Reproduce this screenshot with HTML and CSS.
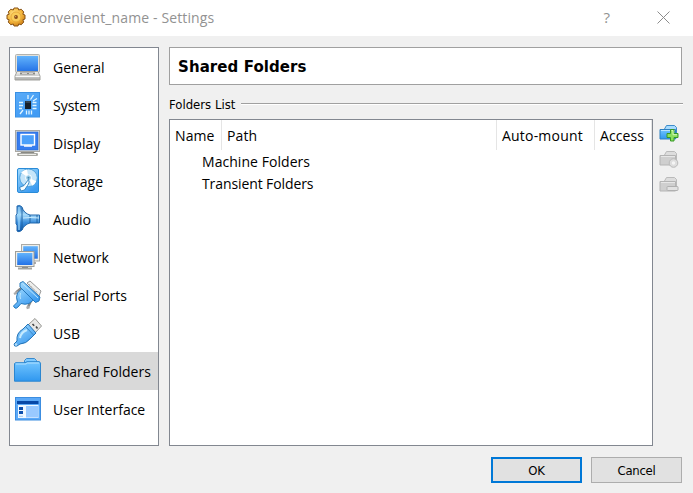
FILE: index.html
```html
<!DOCTYPE html>
<html lang="en">
<head>
<meta charset="utf-8">
<title>convenient_name - Settings</title>
<link rel="stylesheet" href="styles.css">
</head>
<body>
<svg class="defs" width="0" height="0" aria-hidden="true">
  <defs>
    <linearGradient id="sky" x1="0" y1="0" x2="0.6" y2="1"><stop offset="0" stop-color="#a3dcff"/><stop offset="1" stop-color="#3c9bf0"/></linearGradient>
    <linearGradient id="screen" x1="0" y1="0" x2="0" y2="1"><stop offset="0" stop-color="#62b3fc"/><stop offset="1" stop-color="#2472e6"/></linearGradient>
    <linearGradient id="folder" x1="0" y1="0" x2="0" y2="1"><stop offset="0" stop-color="#72c5ff"/><stop offset="1" stop-color="#2f97ef"/></linearGradient>
    <linearGradient id="cone" x1="0" y1="0" x2="0" y2="1"><stop offset="0" stop-color="#2f7ecb"/><stop offset=".35" stop-color="#a8dcfc"/><stop offset=".65" stop-color="#3b8edc"/><stop offset="1" stop-color="#0f58ac"/></linearGradient>
    <linearGradient id="metal" x1="0" y1="0" x2="0" y2="1"><stop offset="0" stop-color="#f4f4f2"/><stop offset="1" stop-color="#a9aaa8"/></linearGradient>
    <radialGradient id="gold" cx=".4" cy=".35" r=".7"><stop offset="0" stop-color="#ffe58a"/><stop offset=".6" stop-color="#f4b63c"/><stop offset="1" stop-color="#c87914"/></radialGradient>
  </defs>
</svg>
<div class="window">
  <header class="titlebar">
    <svg class="app-icon" viewBox="0 0 20 20">
      <path d="M8 1h4l.7 2 2.500-.8 2.600 2.800-1 2.200L19 8v4l-2.200.8 1 2.200-2.600 2.800-2.500-.8-.7 2H8l-.7-2-2.500.8L2.200 15l1-2.200L1 12V8l2.200-.8-1-2.200 2.600-2.800 2.500.8z" fill="url(#gold)" stroke="#8a5519" stroke-linejoin="round"/>
      <circle cx="10" cy="10" r="5" fill="#f9cc5a" stroke="#e3a336" stroke-width=".8"/>
      <circle cx="10" cy="10" r="1.900" fill="#8a4c17"/><circle cx="9.600" cy="9.600" r=".7" fill="#cba379"/>
    </svg>
    <span class="title">convenient_name - Settings</span>
    <span class="help">?</span>
    <svg class="close" viewBox="0 0 13 13"><path d="M.5.5l12 12M12.5.5l-12 12" stroke="#8c8c8c" fill="none"/></svg>
  </header>
  <main class="content">
    <nav class="sidebar">
      <div class="item"><svg viewBox="0 0 30 30">
        <rect x="3.500" y="2.500" width="24" height="18" rx="1" fill="#e3e2dc" stroke="#b3b3ae"/>
        <rect x="5" y="4" width="21" height="15.500" fill="url(#screen)"/>
        <path d="M5 19.500h21l2 4.500v4H3v-4z" fill="url(#metal)" stroke="#a2a29e"/>
        <path d="M8 21.500h15" stroke="#898987" stroke-width="2"/><path d="M10 21.500h5m2 0h4" stroke="#d4d4d2"/><path d="M3.500 24.500h24" stroke="#fafafa"/>
      </svg><span>General</span></div>
      <div class="item"><svg viewBox="0 0 30 30">
        <rect x="3.500" y="2.500" width="24" height="24.500" fill="url(#sky)" stroke="#3990e4"/><rect x="4" y="3" width="23" height="23.500" fill="#429bf6" opacity=".75"/>
        <path d="M16 5v4M21.500 5l-3 4.500M25 8.500l-4 2.500M7 12.500h4M7 15.500h4M7 18.500h3M20.500 12.500h4M20.500 15.500h4M20.500 18.500h4M11 20l-3 4M14.500 20.500v4M17 20.500v4M19.500 20.500v4" stroke="#e0f5ff" stroke-width="1.300" fill="none"/>
        <rect x="13" y="11" width="6" height="8" fill="#17202b"/><path d="M13.500 12h5" stroke="#526475"/>
      </svg><span>System</span></div>
      <div class="item"><svg viewBox="0 0 30 30">
        <path d="M9 24h13l1 2H8z" fill="#888984"/><rect x="5" y="25" width="21" height="3" rx="1.300" fill="#a8a8a2"/><path d="M7 26.500h17" stroke="#ecece8"/>
        <rect x="3.500" y="2.500" width="24" height="21" fill="#deded9" stroke="#aaa9a4"/>
        <rect x="5" y="4" width="21" height="18" fill="#367def" stroke="#2869d0" stroke-width=".6"/>
        <rect x="9" y="6.500" width="13.500" height="10.500" fill="#4ba0fa" stroke="#fff" stroke-width="1.400"/><path d="M12 18h8" stroke="#fff" stroke-width="1.500"/>
      </svg><span>Display</span></div>
      <div class="item"><svg viewBox="0 0 30 30">
        <rect x="5.500" y="2.500" width="21" height="24" rx="1.500" fill="url(#sky)" stroke="#298bd8"/>
        <circle cx="16.500" cy="11.800" r="8.800" fill="#c5e5fa" stroke="#4299d5" stroke-width=".8"/>
        <path d="M16.500 11.800L9 6.500A9 9 0 0 1 15 3.500zM16.500 11.800l7.800 3.500a9 9 0 0 1-4 4.400z" fill="#fff"/>
        <circle cx="16.500" cy="11.800" r="3" fill="#99cce9" stroke="#fff"/><circle cx="16.500" cy="11.800" r="1" fill="#4385ab"/>
        <path d="M7.500 21.500l4.500-2 4.500-6c1 2 .5 4-1 6l-3 4.500-3.500 1z" fill="#f8fdff" stroke="#2b7fbd" stroke-width=".9"/>
      </svg><span>Storage</span></div>
      <div class="item"><svg viewBox="0 0 30 30">
        <path d="M5 2Q8 .5 10 3c1 4 4 7 8 8h9.500v8H18c-4 1-7 4-8 7-2 2-4 2-5 1V21l-1-1v-9l1-1z" fill="url(#cone)" stroke="#2369ad"/>
        <path d="M10 4v22M18 11v8M25 11v8" stroke="#195d9e" fill="none" stroke-width=".9"/><path d="M7 3v23" stroke="#9bd6fa" stroke-width="1.600" opacity=".8"/><path d="M11 14q8-1 16 0" stroke="#c8ecff" fill="none"/>
      </svg><span>Audio</span></div>
      <div class="item"><svg viewBox="0 0 30 30">
        <path d="M16 20h8v2h-8z" fill="#aaa"/><rect x="9.500" y="2.500" width="18" height="16.500" fill="#eeeeea" stroke="#aaaaa5"/><rect x="11.200" y="4.200" width="14.600" height="12.500" fill="url(#screen)"/>
        <path d="M10 24h6v2h-6z" fill="#777"/><path d="M6 26.500h14" stroke="#a5a5a0" stroke-width="2"/>
        <rect x="3.500" y="9.500" width="18.500" height="15" fill="#eeeeea" stroke="#9e9e99"/><rect x="5.200" y="11" width="15.200" height="12" fill="url(#screen)"/>
      </svg><span>Network</span></div>
      <div class="item"><svg viewBox="0 0 30 30">
        <path d="M15 3l3-2 11 10-2 5z" fill="#eeeeec" stroke="#999"/><path d="M17 4l9 9" stroke="#bbb" stroke-dasharray="1.500 1"/>
        <path d="M10 7.500L4 12.500M20 19l-4 8" stroke="#888" stroke-width="2.500"/><path d="M2 14l4-2M14.500 28l3-1" stroke="#aaa" stroke-width="2.500"/>
        <path d="M1.500 26l4-4q-2-5 0-9l5-5L22 19.500l-5 4q-4 1.500-8 0L6 27q-2 2-3 1t-1.500-2z" fill="url(#sky)" stroke="#2678bb"/>
        <path d="M8 3l3-1.500L28 17l-1 4-3.500 1.500L8 7z" fill="url(#sky)" stroke="#2678bb"/><path d="M10.500 3.500L26 18M8.500 13q-1 3 0 6" stroke="#b8e5ff" fill="none"/>
      </svg><span>Serial Ports</span></div>
      <div class="item"><svg viewBox="0 0 30 30">
        <path d="M16 7l7-6.500L29.500 8 23 15z" fill="#e8e8e6" stroke="#94948f"/><path d="M20.500 6l1.700 1.700M24 8.500l1.500 2" stroke="#444" stroke-width="1.600"/>
        <path d="M2 26l3-3q-1-8 6-12l5-5 8 9-5 5q-5 6-11 6l-3 2q-3 1-3-2z" fill="url(#sky)" stroke="#2373b6"/><path d="M14 9l7.500 8" stroke="#3b88c5"/><path d="M8 20q1-6 7-8" stroke="#c6ebff" stroke-width="2" fill="none"/><circle cx="4" cy="26.500" r="1.300" fill="#b4ddf7"/>
      </svg><span>USB</span></div>
      <div class="item selected"><svg viewBox="0 0 30 30">
        <path d="M12.500 8V4.500L14.500 2.500h8l2 2V6h2.500l1 1v17h-15z" fill="#7fcaff" stroke="#3889cc"/>
        <path d="M2.500 7.500l1-.8h9.500l2-1h12.500l1 1.500v18h-26z" fill="url(#folder)" stroke="#2c86cf"/><path d="M4 8h10l1.500-1H27" stroke="#b1e0ff" fill="none"/>
      </svg><span>Shared Folders</span></div>
      <div class="item"><svg viewBox="0 0 30 30">
        <rect x="3.500" y="3.500" width="25" height="22.500" fill="#5ba9f8" stroke="#3c8de0"/><rect x="6" y="11" width="20.500" height="13" fill="#eef7ff"/>
        <path d="M5 8.500h21.500" stroke="#0748a7" stroke-width="3"/><rect x="14" y="12" width="12" height="11.500" fill="#99c9ff"/><path d="M7 14.500h4M7 18.500h4" stroke="#0c4fae" stroke-width="3"/><path d="M7 22.300h4" stroke="#9bc9f5"/>
      </svg><span>User Interface</span></div>
    </nav>
    <section class="panel">
      <h1>Shared Folders</h1>
      <div class="group"><span>Folders List</span><i></i></div>
      <div class="folders">
        <div class="tree">
          <div class="columns"><span>Name</span><span>Path</span><span class="auto">Auto-mount</span><span>Access</span></div>
          <div class="row machine">Machine Folders</div>
          <div class="row">Transient Folders</div>
        </div>
        <div class="tools">
          <svg viewBox="0 0 20 20"><path d="M5.500 6l2-3.500h8l2 2V15h-12z" fill="#a7dbff" stroke="#3d8dca"/><path d="M1 6.500h15.500V16H1z" fill="url(#folder)" stroke="#2e80c0"/><path d="M2 7.500h14" stroke="#b7e3ff"/><path d="M11.500 6.500h3.500V10.500h4v4h-4v3.500h-3.500v-3.500H8v-4h3.500z" fill="#8ce05e" stroke="#369926"/><path d="M12.500 7.500h1.500v4.200h4" stroke="#d4f9bc" fill="none"/></svg>
          <svg viewBox="0 0 20 20"><path d="M5.500 6l2-3.500h8l2 2V15h-12z" fill="#ddd" stroke="#bababa"/><path d="M1 6.500h15.500V16H1z" fill="#cfcfcf" stroke="#b4b4b4"/><path d="M2 7.500h14" stroke="#e7e7e7"/><circle cx="14.500" cy="14" r="4.300" fill="#dedede" stroke="#bababa"/><circle cx="14.500" cy="14" r="1.700" fill="#f5f5f5"/></svg>
          <svg viewBox="0 0 20 20"><path d="M5.500 6l2-3.500h8l2 2V15h-12z" fill="#ddd" stroke="#bababa"/><path d="M1 6.500h15.500V16H1z" fill="#cfcfcf" stroke="#b4b4b4"/><path d="M2 7.500h14" stroke="#e7e7e7"/><rect x="8" y="11.500" width="11" height="4" rx=".7" fill="#e2e2e2" stroke="#b0b0b0"/></svg>
        </div>
      </div>
    </section>
  </main>
  <footer><button class="default">OK</button><button>Cancel</button></footer>
</div>
</body>
</html>
```
FILE: styles.css
```css
* { box-sizing: border-box; }
body { margin: 0; overflow: hidden; background: #f0f0f0; color: #000; font: 14px/20px "Open Sans", "Noto Sans", sans-serif; }
.defs { position: absolute; }
.window { width: 693px; height: 493px; display: flex; flex-direction: column; }
.titlebar { height: 36px; flex: none; background: #fff; color: #929292; display: flex; align-items: center; padding: 0 23px 0 6px; }
.app-icon { width: 20px; height: 20px; margin-top: -3px; }
.title { margin-left: 6px; margin-top: -1px; letter-spacing: .12px; white-space: nowrap; }
.help { margin-left: auto; margin-right: 47px; font-size: 15px; margin-top: -2px; }
.close { width: 13px; height: 13px; margin-top: -2px; }
.content { display: flex; height: 410px; flex: none; padding: 11px 10px 0 9px; gap: 10px; }
.sidebar { width: 150px; height: 399px; border: 1px solid #828790; background: #fff; }
.item { height: 38px; display: flex; align-items: center; padding-left: 2px; white-space: nowrap; }
.item svg { width: 30px; height: 30px; margin-right: 11px; flex: none; }
.item span { padding-top: 2px; }
.item.selected { background: #d9d9d9; }
.panel { width: 514px; flex: none; }
h1 { margin: 0; width: 513px; height: 38px; border: 1px solid #a0a0a0; background: #fff; font: bold 15px/38px "DejaVu Sans", sans-serif; padding-left: 8px; letter-spacing: .08px; }
.group { height: 34px; display: flex; align-items: center; padding-top: 4px; font: 13px/16px "DejaVu Sans Condensed", "DejaVu Sans", sans-serif; white-space: nowrap; }
.group span { width: 72px; padding-top: 1px; }
.group i { flex: 1; height: 2px; border-top: 1px solid #a0a0a0; background: #fff; }
.folders { display: flex; }
.tree { width: 484px; height: 327px; border: 1px solid #828790; background: #fff; }
.columns { height: 30px; display: grid; grid-template-columns: 52px 275px 98px 57px; line-height: 31px; }
.columns span { height: 30px; border-right: 1px solid #e5e5e5; padding-left: 5px; white-space: nowrap; letter-spacing: .1px; }
.columns .auto { letter-spacing: .2px; }
.row { height: 22px; line-height: 23px; padding-left: 32px; letter-spacing: -.1px; }
.machine { letter-spacing: .05px; }
.tools { display: flex; flex-direction: column; gap: 6px; padding: 4px 0 0 6px; }
.tools svg { width: 20px; height: 20px; }
footer { display: flex; gap: 9px; justify-content: flex-end; padding: 11px 11px 0 0; }
button { width: 91px; height: 26px; padding: 2px 0 0; border: 1px solid #adadad; border-radius: 0; background: #e1e1e1; font: 13px/20px "DejaVu Sans Condensed", "DejaVu Sans", sans-serif; letter-spacing: -.3px; color: #000; }
button.default { border: 2px solid #0078d7; }
```
